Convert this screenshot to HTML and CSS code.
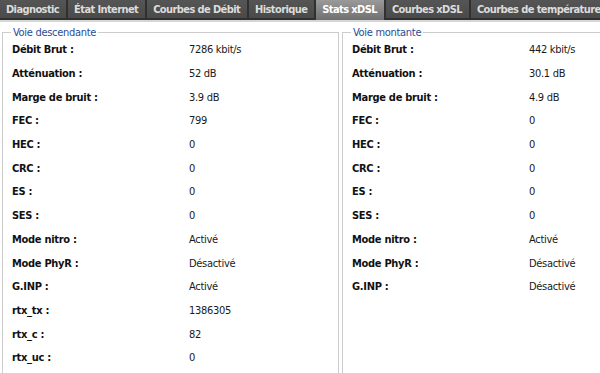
FILE: index.html
```html
<!DOCTYPE html>
<html lang="fr">
<head>
    <meta charset="UTF-8">
    <meta name="viewport" content="width=device-width, initial-scale=1.0">
    <title>Stats xDSL</title>
    <link rel="stylesheet" href="styles.css">
</head>
<body>
    <div class="tabbar">
        <div class="tab">Diagnostic</div>
        <div class="tab">État Internet</div>
        <div class="tab">Courbes de Débit</div>
        <div class="tab">Historique</div>
        <div class="tab active">Stats xDSL</div>
        <div class="tab">Courbes xDSL</div>
        <div class="tab">Courbes de température</div>
    </div>

    <div class="panels">
        <fieldset class="panel">
            <legend>Voie descendante</legend>
            <div class="row"><span class="label">Débit Brut :</span><span>7286 kbit/s</span></div>
            <div class="row"><span class="label">Atténuation :</span><span>52 dB</span></div>
            <div class="row"><span class="label">Marge de bruit :</span><span>3.9 dB</span></div>
            <div class="row"><span class="label">FEC :</span><span>799</span></div>
            <div class="row"><span class="label">HEC :</span><span>0</span></div>
            <div class="row"><span class="label">CRC :</span><span>0</span></div>
            <div class="row"><span class="label">ES :</span><span>0</span></div>
            <div class="row"><span class="label">SES :</span><span>0</span></div>
            <div class="row"><span class="label">Mode nitro :</span><span>Activé</span></div>
            <div class="row"><span class="label">Mode PhyR :</span><span>Désactivé</span></div>
            <div class="row"><span class="label">G.INP :</span><span>Activé</span></div>
            <div class="row"><span class="label">rtx_tx :</span><span>1386305</span></div>
            <div class="row"><span class="label">rtx_c :</span><span>82</span></div>
            <div class="row"><span class="label">rtx_uc :</span><span>0</span></div>
        </fieldset>

        <fieldset class="panel">
            <legend>Voie montante</legend>
            <div class="row"><span class="label">Débit Brut :</span><span>442 kbit/s</span></div>
            <div class="row"><span class="label">Atténuation :</span><span>30.1 dB</span></div>
            <div class="row"><span class="label">Marge de bruit :</span><span>4.9 dB</span></div>
            <div class="row"><span class="label">FEC :</span><span>0</span></div>
            <div class="row"><span class="label">HEC :</span><span>0</span></div>
            <div class="row"><span class="label">CRC :</span><span>0</span></div>
            <div class="row"><span class="label">ES :</span><span>0</span></div>
            <div class="row"><span class="label">SES :</span><span>0</span></div>
            <div class="row"><span class="label">Mode nitro :</span><span>Activé</span></div>
            <div class="row"><span class="label">Mode PhyR :</span><span>Désactivé</span></div>
            <div class="row"><span class="label">G.INP :</span><span>Désactivé</span></div>
        </fieldset>
    </div>
</body>
</html>
```

FILE: styles.css
```css
html, body {
    margin: 0;
    height: 100%;
    overflow: hidden;
    background: #ffffff;
}
body {
    font-family: "DejaVu Sans Condensed", "DejaVu Sans", sans-serif;
    font-size: 11px;
    letter-spacing: -0.3px;
    color: #1a1a1a;
}

/* barre d'onglets */
.tabbar {
    display: flex;
    gap: 2px;
    height: 20px;
    background: #303030;
    border-bottom: 2px solid #d6d6d6;
    white-space: nowrap;
    overflow: hidden;
}
.tab {
    flex-shrink: 0;
    height: 18px;
    line-height: 19px;
    padding: 0 7px 0 6px;
    background: linear-gradient(#555555, #4a4a4a);
    color: #dcdcdc;
    font-weight: bold;
    letter-spacing: -0.6px;
}
.tab.active {
    height: 20px;
    background: linear-gradient(#9a9a9a, #707070);
    color: #ffffff;
}

/* panneaux */
.panels {
    display: flex;
    gap: 3px;
    padding: 0 2px;
    margin-top: 4px;
}
.panel {
    flex-shrink: 0;
    box-sizing: border-box;
    width: 337px;
    min-width: 0;
    margin: 0;
    padding: 0 9px 40px 9px;
    border: 1px solid #cccccc;
    min-height: 360px;
}
.panel legend {
    padding: 0 2px;
    margin-left: -1px;
    margin-bottom: -1px;
    color: #2a4c96;
}
.row {
    display: flex;
    height: 23.7px;
    align-items: center;
}
.label {
    width: 177px;
    flex-shrink: 0;
    font-weight: bold;
    color: #111111;
}
```
